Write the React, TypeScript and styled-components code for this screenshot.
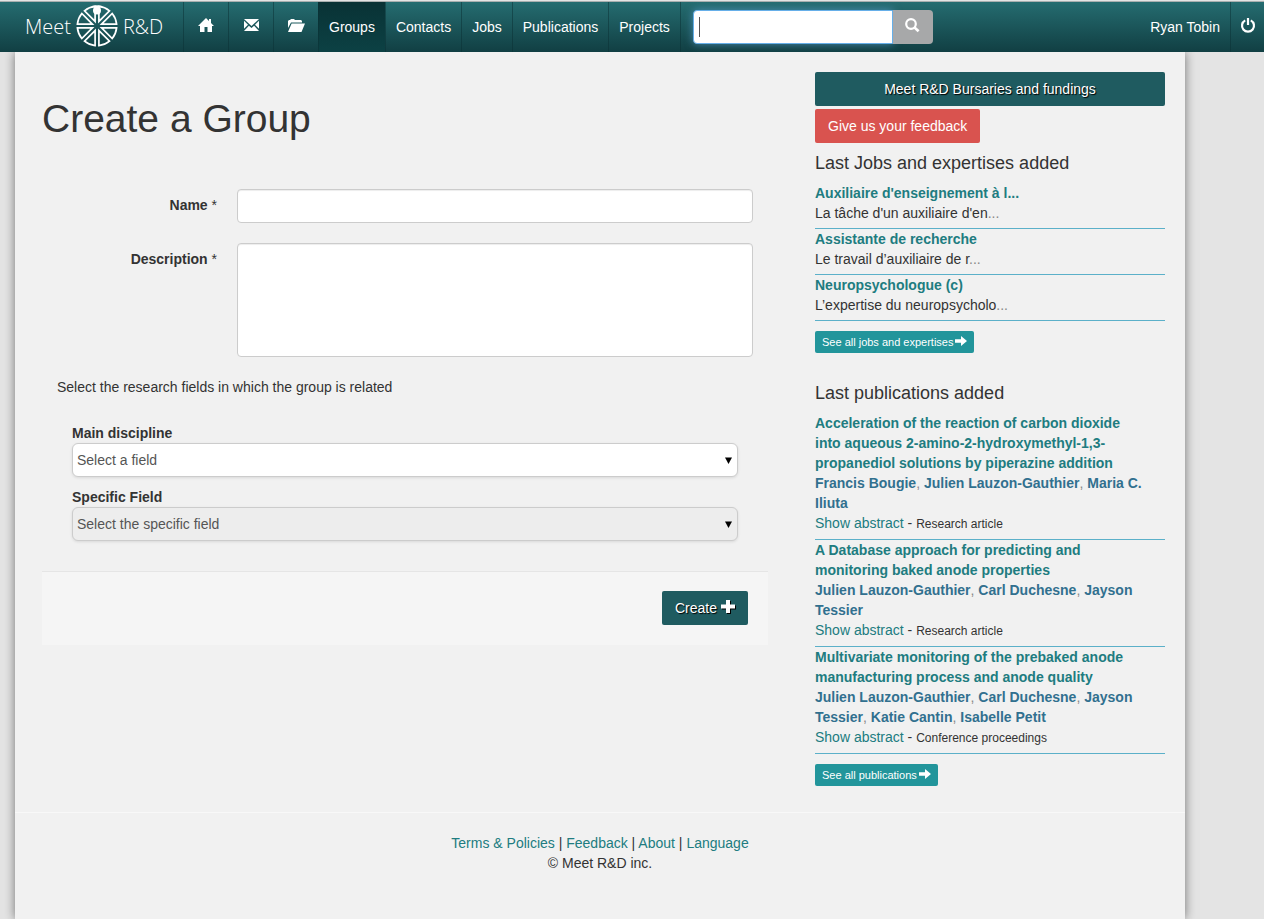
import React from "react";
import styled, { createGlobalStyle, css } from "styled-components";

const GlobalStyle = createGlobalStyle`
  *, *::before, *::after { box-sizing: border-box; }
  body {
    margin: 0;
    background: #e4e4e4;
    color: #333;
    font-family: "Liberation Sans", Arial, sans-serif;
    font-size: 14px;
    line-height: 20px;
  }
  #root { min-height: 100vh; display: flex; }
  a { color: #207c80; text-decoration: none; }
  p, h1, h2, ul { margin: 0; padding: 0; font-weight: normal; }
  ul { list-style: none; }
  button, input, textarea, select { font: inherit; color: inherit; margin: 0; }
`;

const Shell = styled.div`
  flex: 1;
  min-width: 0;
  display: flex;
  flex-direction: column;
  padding-top: 1px;
`;

const Navbar = styled.header`
  display: flex;
  height: 51px;
  border-top: 1px solid #a9afaf;
  background: linear-gradient(#256c70, #113f43);
  color: #fff;
  position: relative;
  z-index: 1;
`;

const Brand = styled.a`
  display: flex;
  align-items: center;
  width: 183px;
  padding-left: 25px;
  gap: 4px;
  color: #fff;
  font: 300 20px/30px "Open Sans", "Noto Sans", sans-serif;
  svg { flex: none; margin-bottom: 2px; }
`;

const Menu = styled.nav`
  display: flex;
`;

const NavLink = styled.a<{ $active?: boolean; $icon?: boolean }>`
  display: flex;
  align-items: center;
  justify-content: center;
  padding: 0 10px;
  border-left: 1px solid rgba(9, 48, 52, 0.5);
  color: #fff;
  white-space: nowrap;
  ${(p) => p.$icon && css`width: 45px; padding: 0 0 4px;`}
  ${(p) => p.$active && css`background: linear-gradient(#093235, #0c4144);`}
`;

const Search = styled.form`
  display: flex;
  align-items: flex-start;
  padding: 8px 0 0 12px;
  border-left: 1px solid rgba(9, 48, 52, 0.5);
`;

const SearchInput = styled.input`
  width: 200px;
  height: 34px;
  padding: 6px 5px;
  border: 1px solid #66afe9;
  border-radius: 4px 0 0 4px;
  background: linear-gradient(#555, #555) 5px 6px / 1px 20px no-repeat #fff;
  color: #555;
  caret-color: transparent;
  outline: 0;
  box-shadow: 0 0 8px rgba(102, 175, 233, 0.6);
  &:not(:placeholder-shown) {
    background-image: none;
    caret-color: auto;
  }
`;

const SearchButton = styled.button`
  display: flex;
  align-items: center;
  justify-content: center;
  width: 40px;
  height: 34px;
  padding: 0 0 3px;
  border: 0;
  border-radius: 0 4px 4px 0;
  background: #a7a8a9;
  color: #fff;
`;

const Account = styled.div`
  display: flex;
  margin-left: auto;
`;

const UserLink = styled.a`
  display: flex;
  align-items: center;
  padding: 0 10px;
  color: #fff;
`;

const PowerLink = styled(UserLink)`
  width: 34px;
  padding: 0 0 4px 9px;
  border-left: 1px solid rgba(9, 48, 52, 0.5);
`;

const Page = styled.div`
  flex: 1;
  margin: 0 79px 0 15px;
  background: #f1f1f1;
  box-shadow: 0 0 10px rgba(0, 0, 0, 0.5);
`;

const Columns = styled.div`
  display: grid;
  grid-template-columns: minmax(0, 1fr) 350px;
  gap: 47px;
  padding: 20px 20px 26px 27px;
`;

const Title = styled.h1`
  padding-top: 25px;
  font-size: 39px;
  line-height: 44px;
`;

const Form = styled.form`
  padding-top: 48px;
`;

const FormRow = styled.div`
  display: flex;
  gap: 20px;
  margin-bottom: 20px;
  padding-right: 15px;
`;

const RowLabel = styled.label`
  width: 175px;
  padding-top: 6px;
  text-align: right;
  font-weight: bold;
  span { font-weight: normal; }
`;

const fieldStyle = css`
  flex: 1;
  min-width: 0;
  padding: 6px 12px;
  border: 1px solid #ccc;
  border-radius: 4px;
  background: #fff;
  box-shadow: inset 0 1px 1px rgba(0, 0, 0, 0.075);
  outline: 0;
`;

const TextInput = styled.input`
  ${fieldStyle}
  height: 34px;
`;

const TextArea = styled.textarea`
  ${fieldStyle}
  height: 114px;
  resize: none;
`;

const Fields = styled.fieldset`
  margin: 0;
  padding: 0 30px 30px;
  border: 0;
`;

const Intro = styled.p`
  padding: 0 15px 26px;
`;

const SelectGroup = styled.div`
  margin-bottom: 10px;
  &:last-child { margin-bottom: 0; }
  label { display: block; font-weight: bold; }
`;

const SelectBox = styled.div`
  position: relative;
  svg { position: absolute; right: 6px; top: 14px; pointer-events: none; }
`;

const Select = styled.select`
  appearance: none;
  display: block;
  width: 100%;
  height: 34px;
  padding: 0 20px 0 4px;
  border: 1px solid #ccc;
  border-radius: 6px;
  background: #fff;
  color: #555;
  opacity: 1;
  box-shadow: 0 1px 3px rgba(0, 0, 0, 0.1);
  &:disabled { background: #ededed; }
`;

const Actions = styled.div`
  display: flex;
  justify-content: flex-end;
  padding: 19px 20px 20px;
  border-top: 1px solid #e5e5e5;
  background: #f5f5f5;
`;

const darkButton = css`
  display: flex;
  align-items: center;
  justify-content: center;
  gap: 4px;
  height: 34px;
  padding: 0 13px;
  border: 0;
  border-radius: 2px;
  background: #1f5b60;
  color: #fff;
  text-shadow: 1px 1px 1px #000;
  svg { filter: drop-shadow(1px 1px 0 #000); margin-bottom: 3px; }
`;

const CreateButton = styled.button`
  ${darkButton}
`;

const Sidebar = styled.aside`
  min-width: 0;
`;

const FundingLink = styled.a`
  ${darkButton}
  margin-bottom: 3px;
`;

const FeedbackButton = styled.button`
  display: block;
  height: 34px;
  padding: 0 13px;
  border: 0;
  border-radius: 2px;
  background: #d9534f;
  color: #fff;
`;

const Section = styled.section`
  padding: 10px 0 20px;
  &:last-child { padding-bottom: 0; }
`;

const SectionTitle = styled.h2`
  margin-bottom: 10px;
  font-size: 18px;
  line-height: 20px;
`;

const Entry = styled.li`
  padding-bottom: 5px;
  border-bottom: 1px solid #5bb0c9;
`;

const EntryTitle = styled.a`
  display: block;
  padding-right: 20px;
  font-weight: bold;
`;

const Faint = styled.span`
  color: #888;
`;

const Authors = styled.p`
  a { color: #31708f; font-weight: bold; }
`;

const Kind = styled.small`
  font-size: 12px;
`;

const MoreLink = styled.a`
  display: inline-flex;
  align-items: center;
  gap: 2px;
  height: 22px;
  margin-top: 10px;
  padding: 0 7px;
  border-radius: 2px;
  background: #22959b;
  color: #fff;
  font-size: 11px;
  vertical-align: top;
  svg { margin-bottom: 3px; }
`;

const Footer = styled.footer`
  padding: 20px 0 46px;
  border-top: 1px solid #f8f8f8;
  text-align: center;
`;

const Wheel = () => (
  <svg width="44" height="44" viewBox="-22 -22 44 44" fill="none" stroke="#fff" strokeWidth="1.7" aria-hidden="true">
    {[0, 45, 90, 135, 180, 225, 270, 315].map((angle) => (
      <path
        key={angle}
        transform={`rotate(${angle})`}
        d="M4.6 1.9 L19.6 1.9 A19.7 19.7 0 0 1 15.2 12.5 Z"
      />
    ))}
    <path d="M-5 -19.2 A19.8 19.8 0 0 1 5 -19.2" />
    <circle cx="0" cy="-15.4" r="4" fill="#fff" stroke="none" />
  </svg>
);

const HomeIcon = () => (
  <svg width="16" height="14" viewBox="0 0 16 14" fill="#fff" aria-hidden="true">
    <path d="M8 0 L11 3 V1 H13 V5 L16 8 H14 V14 H9.5 V9 H6.5 V14 H2 V8 H0 Z" />
  </svg>
);

const MailIcon = () => (
  <svg width="15" height="12" viewBox="0 0 15 12" fill="#fff" aria-hidden="true">
    <path d="M0 0 H15 L7.5 7 Z M0 1.8 L4 5.7 L0 9.8 Z M15 1.8 V9.8 L11 5.7 Z M4.9 6.7 L7.5 9.1 L10.1 6.7 L15 12 H0 Z" />
  </svg>
);

const FolderIcon = () => (
  <svg width="18" height="13" viewBox="0 0 18 13" fill="#fff" aria-hidden="true">
    <path d="M1 9 V2 L2 1 H3 L4 0 H7 L8 1 H14 L15 2 V3.5 H4 Z M4.6 4.5 H18 L14.5 13 H1 Z" />
  </svg>
);

const SearchIcon = () => (
  <svg width="15" height="15" viewBox="0 0 15 15" fill="none" stroke="#fff" aria-hidden="true">
    <circle cx="6" cy="6" r="4.8" strokeWidth="2.2" />
    <path d="M9.5 9.5 L13.6 13.3" strokeWidth="2.6" />
  </svg>
);

const PowerIcon = () => (
  <svg width="16" height="15" viewBox="0 0 16 15" fill="none" stroke="#fff" strokeWidth="2.2" aria-hidden="true">
    <path d="M5.2 2.4 A6 6 0 1 0 10.8 2.4 M8 0 V7" />
  </svg>
);

const PlusIcon = () => (
  <svg width="14" height="13" viewBox="0 0 14 13" fill="#fff" aria-hidden="true">
    <path d="M5 0 H9 V4.5 H14 V8.5 H9 V13 H5 V8.5 H0 V4.5 H5 Z" />
  </svg>
);

const ArrowIcon = () => (
  <svg width="12" height="10" viewBox="0 0 12 10" fill="#fff" aria-hidden="true">
    <path d="M0 3.3 H6 V0 L12 5 L6 10 V6.7 H0 Z" />
  </svg>
);

const DropArrow = () => (
  <svg width="7" height="7" viewBox="0 0 7 7" aria-hidden="true">
    <path d="M0 0.5 H7 L3.5 7 Z" fill="#000" />
  </svg>
);

const jobs = [
  { title: "Auxiliaire d'enseignement à l...", text: "La tâche d'un auxiliaire d'en" },
  { title: "Assistante de recherche", text: "Le travail d’auxiliaire de r" },
  { title: "Neuropsychologue (c)", text: "L’expertise du neuropsycholo" },
];

const publications = [
  {
    title: "Acceleration of the reaction of carbon dioxide into aqueous 2-amino-2-hydroxymethyl-1,3-propanediol solutions by piperazine addition",
    authors: ["Francis Bougie", "Julien Lauzon-Gauthier", "Maria C. Iliuta"],
    kind: "Research article",
  },
  {
    title: "A Database approach for predicting and monitoring baked anode properties",
    authors: ["Julien Lauzon-Gauthier", "Carl Duchesne", "Jayson Tessier"],
    kind: "Research article",
  },
  {
    title: "Multivariate monitoring of the prebaked anode manufacturing process and anode quality",
    authors: ["Julien Lauzon-Gauthier", "Carl Duchesne", "Jayson Tessier", "Katie Cantin", "Isabelle Petit"],
    kind: "Conference proceedings",
  },
];

export default function App() {
  return (
    <>
      <GlobalStyle />
      <Shell>
        <Navbar>
          <Brand href="#">
            <span>Meet</span>
            <Wheel />
            <span>R&amp;D</span>
          </Brand>
          <Menu>
            <NavLink href="#" $icon aria-label="Home"><HomeIcon /></NavLink>
            <NavLink href="#" $icon aria-label="Messages"><MailIcon /></NavLink>
            <NavLink href="#" $icon aria-label="Files"><FolderIcon /></NavLink>
            <NavLink href="#" $active>Groups</NavLink>
            <NavLink href="#">Contacts</NavLink>
            <NavLink href="#">Jobs</NavLink>
            <NavLink href="#">Publications</NavLink>
            <NavLink href="#">Projects</NavLink>
          </Menu>
          <Search onSubmit={(e) => e.preventDefault()}>
            <SearchInput type="text" aria-label="Search" placeholder=" " autoFocus />
            <SearchButton aria-label="Search"><SearchIcon /></SearchButton>
          </Search>
          <Account>
            <UserLink href="#">Ryan Tobin</UserLink>
            <PowerLink href="#" aria-label="Log out"><PowerIcon /></PowerLink>
          </Account>
        </Navbar>
        <Page>
          <Columns>
            <main>
              <Title>Create a Group</Title>
              <Form onSubmit={(e) => e.preventDefault()}>
                <FormRow>
                  <RowLabel htmlFor="name">Name <span>*</span></RowLabel>
                  <TextInput id="name" type="text" />
                </FormRow>
                <FormRow>
                  <RowLabel htmlFor="description">Description <span>*</span></RowLabel>
                  <TextArea id="description" />
                </FormRow>
                <Intro>Select the research fields in which the group is related</Intro>
                <Fields>
                  <SelectGroup>
                    <label htmlFor="discipline">Main discipline</label>
                    <SelectBox>
                      <Select id="discipline"><option>Select a field</option></Select>
                      <DropArrow />
                    </SelectBox>
                  </SelectGroup>
                  <SelectGroup>
                    <label htmlFor="specific">Specific Field</label>
                    <SelectBox>
                      <Select id="specific" disabled><option>Select the specific field</option></Select>
                      <DropArrow />
                    </SelectBox>
                  </SelectGroup>
                </Fields>
                <Actions>
                  <CreateButton type="submit">Create <PlusIcon /></CreateButton>
                </Actions>
              </Form>
            </main>
            <Sidebar>
              <FundingLink href="#">Meet R&amp;D Bursaries and fundings</FundingLink>
              <FeedbackButton type="button">Give us your feedback</FeedbackButton>
              <Section>
                <SectionTitle>Last Jobs and expertises added</SectionTitle>
                <ul>
                  {jobs.map((job) => (
                    <Entry key={job.title}>
                      <EntryTitle href="#">{job.title}</EntryTitle>
                      <p>{job.text}<Faint>...</Faint></p>
                    </Entry>
                  ))}
                </ul>
                <MoreLink href="#">See all jobs and expertises <ArrowIcon /></MoreLink>
              </Section>
              <Section>
                <SectionTitle>Last publications added</SectionTitle>
                <ul>
                  {publications.map((pub) => (
                    <Entry key={pub.title}>
                      <EntryTitle href="#">{pub.title}</EntryTitle>
                      <Authors>
                        {pub.authors.map((author, i) => (
                          <React.Fragment key={author}>
                            {i > 0 && <Faint>, </Faint>}
                            <a href="#">{author}</a>
                          </React.Fragment>
                        ))}
                      </Authors>
                      <p><a href="#">Show abstract</a> <span>-</span> <Kind>{pub.kind}</Kind></p>
                    </Entry>
                  ))}
                </ul>
                <MoreLink href="#">See all publications <ArrowIcon /></MoreLink>
              </Section>
            </Sidebar>
          </Columns>
          <Footer>
            <p>
              <a href="#">Terms &amp; Policies</a> <span>|</span> <a href="#">Feedback</a> <span>|</span>{" "}
              <a href="#">About</a> <span>|</span> <a href="#">Language</a>
            </p>
            <p>© Meet R&amp;D inc.</p>
          </Footer>
        </Page>
      </Shell>
    </>
  );
}
